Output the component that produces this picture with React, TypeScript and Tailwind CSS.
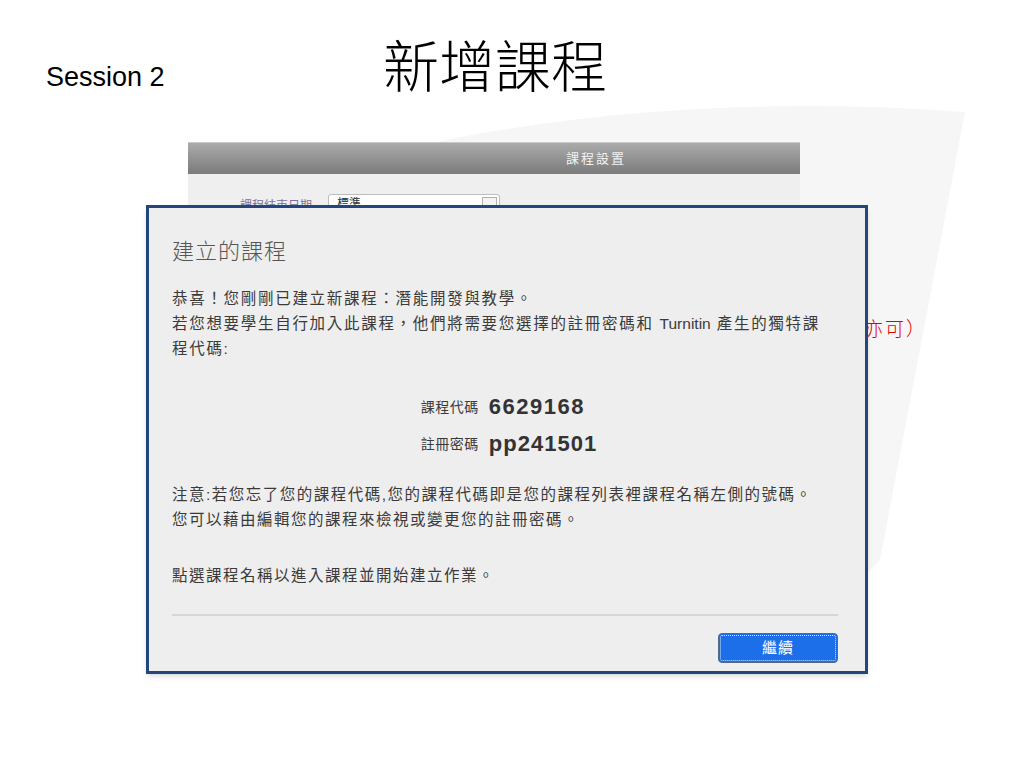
import React from 'react'

const cjk = "font-['Liberation_Sans','Noto_Sans_CJK_TC',sans-serif]"

function Watermark() {
  return (
    <svg className="absolute inset-0" width="1024" height="768" viewBox="0 0 1024 768">
      <path d="M 400 150 Q 660 90 965 112 L 880 560 L 830 610 L 190 520 L 150 460 Z" fill="#f6f6f6" />
    </svg>
  )
}

function SettingsPanel() {
  return (
    <div className="ml-[188px] w-[612px]">
      <div className="h-[32px] border-t border-[#c9c9c9] bg-gradient-to-b from-[#ababab] to-[#7b7b7b] pl-[378px] text-[13px] leading-[31px] tracking-[2px] text-[#f2f2f2]">
        課程設置
      </div>
      <div className="h-[400px] bg-[#efefef] pt-[20px]">
        <div className="flex items-end">
          <span className="ml-[52px] w-[88px] text-[12px] leading-[16px] text-[#7a6f9a]">課程結束日期</span>
          <div className="flex h-[20px] w-[172px] items-center justify-between rounded-[3px] border border-[#bdbdbd] bg-white pl-[8px] pr-[2px] text-[12px] text-[#333]">
            標準
            <span className="h-[15px] w-[15px] border border-[#b0b0b0] bg-[#f4f4f4]" />
          </div>
        </div>
      </div>
    </div>
  )
}

function Dialog() {
  return (
    <div className={`absolute left-[146px] top-[205px] z-10 w-[722px] border-[3px] border-[#23477a] bg-[#eeeeee] px-[23px] pb-[8px] pt-[32px] text-[#3a3a3a] shadow-md ${cjk}`}>
      <h2 className="text-[22px] font-light leading-[24px] tracking-[1px] text-[#555]">建立的課程</h2>
      <div className="mt-[22px] text-[15.5px] leading-[25px] tracking-[1.7px]">
        <p>恭喜！您剛剛已建立新課程：潛能開發與教學。</p>
        <p>
          若您想要學生自行加入此課程，他們將需要您選擇的註冊密碼和 <span className="tracking-normal">Turnitin</span> 產生的獨特課
          <br />
          程代碼:
        </p>
      </div>
      <div className="mt-[31px] flex justify-center">
        <div className="grid grid-cols-[auto_auto] items-center gap-x-[10px] gap-y-[7px] pl-[4px] leading-[30px]">
          <span className="text-[14px] tracking-[0.5px]">課程代碼</span>
          <span className="text-[22px] font-bold tracking-[1.5px] text-[#333]">6629168</span>
          <span className="text-[14px] tracking-[0.5px]">註冊密碼</span>
          <span className="text-[22px] font-bold tracking-[1px] text-[#333]">pp241501</span>
        </div>
      </div>
      <div className="mt-[23px] text-[15.5px] leading-[25px] tracking-[1.5px]">
        <p>注意:若您忘了您的課程代碼,您的課程代碼即是您的課程列表裡課程名稱左側的號碼。</p>
        <p>您可以藉由編輯您的課程來檢視或變更您的註冊密碼。</p>
      </div>
      <p className="mt-[31px] text-[15.5px] leading-[25px] tracking-[1.5px]">點選課程名稱以進入課程並開始建立作業。</p>
      <div className="mr-[4px] mt-[26px] h-[2px] bg-[#d6d6d6]" />
      <div className="mr-[4px] mt-[17px] flex justify-end">
        <button className="h-[30px] w-[120px] rounded-[4px] border border-[#56688a] bg-[#1c6fe9] text-[15px] tracking-[1px] text-white outline-1 outline-offset-[-3px] outline-white/80 outline-dotted">
          繼續
        </button>
      </div>
    </div>
  )
}

export default function App() {
  return (
    <div className={`relative h-[768px] w-[1024px] overflow-hidden bg-white ${cjk}`}>
      <Watermark />
      <div className="relative flex h-[142px] items-start">
        <div className="ml-[46px] mt-[61px] w-[337px] text-[27px] leading-[32px] text-black">Session 2</div>
        <h1 className="mt-[40px] text-[56px] font-light leading-[56px] text-black">新增課程</h1>
      </div>
      <div className="relative">
        <SettingsPanel />
      </div>
      <span className="absolute left-[864px] top-[318px] text-[19px] font-light leading-[24px] tracking-[2px] text-[#e00000]">亦可）</span>
      <Dialog />
    </div>
  )
}
